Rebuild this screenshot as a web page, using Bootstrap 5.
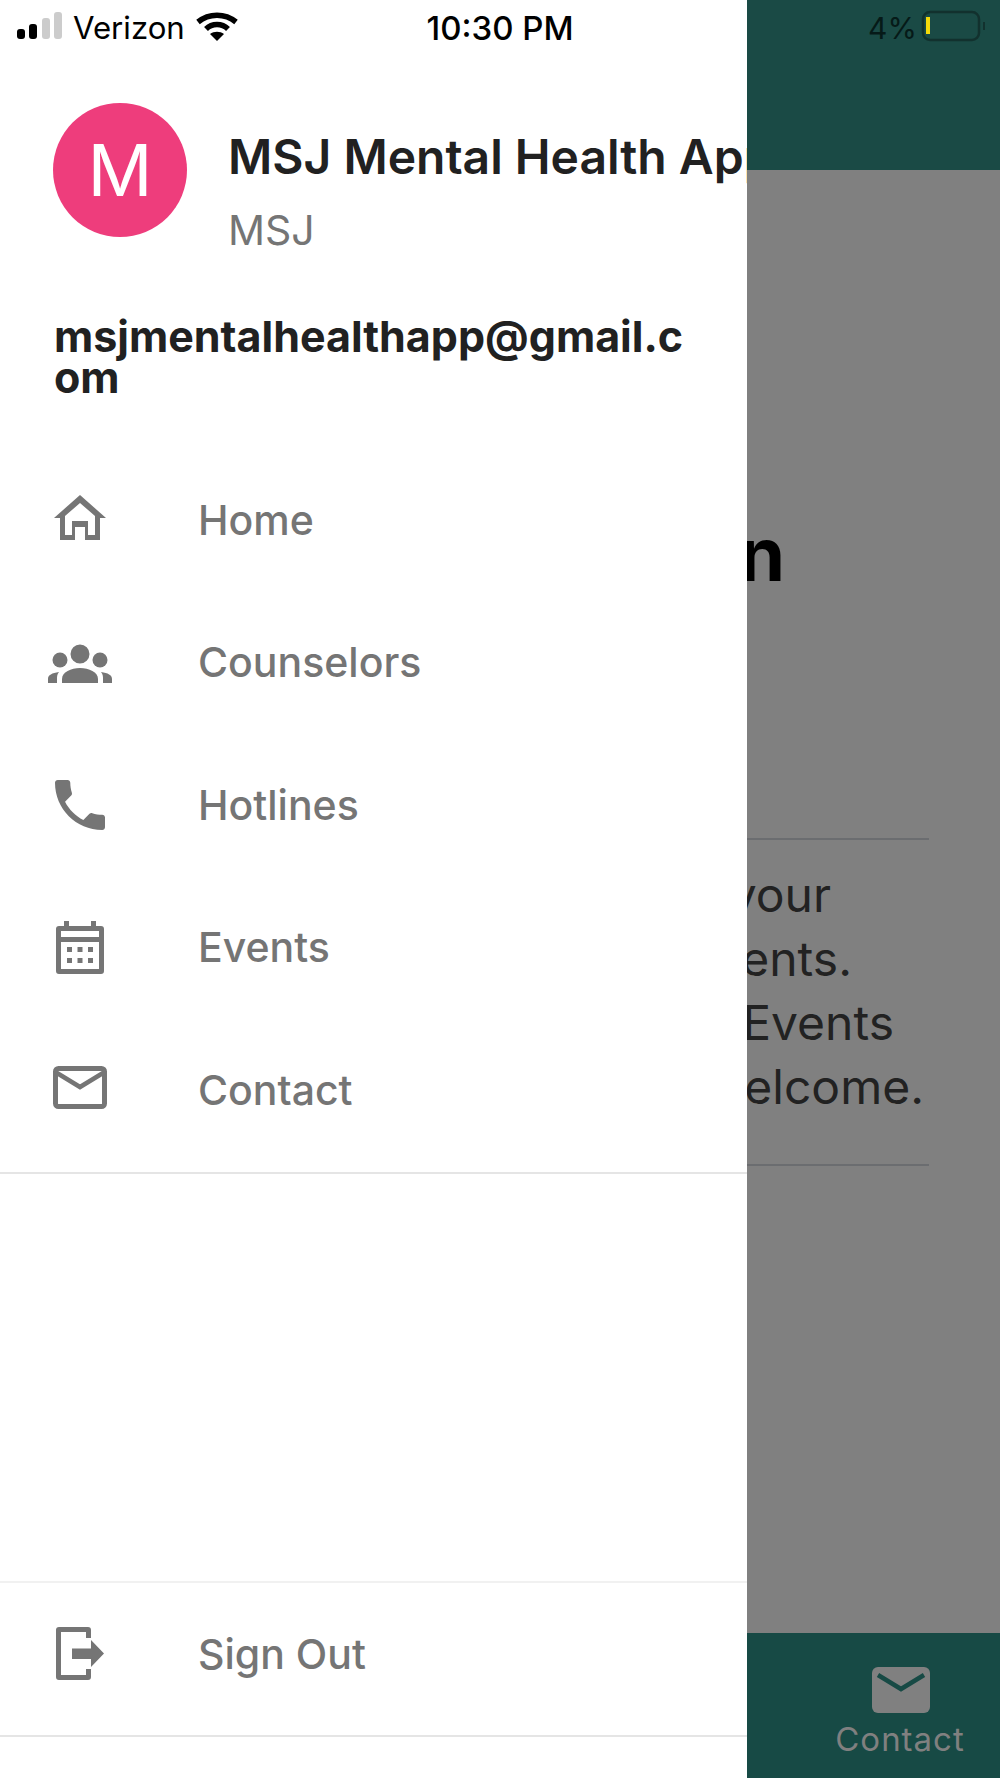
<!DOCTYPE html>
<html lang="en">
<head>
    <meta charset="UTF-8">
    <meta name="viewport" content="width=device-width, initial-scale=1.0">
    <title>MSJ Mental Health App</title>
    <link href="https://cdn.jsdelivr.net/npm/bootstrap@5.3.2/dist/css/bootstrap.min.css" rel="stylesheet">
    <style>
        body { width: 1000px; height: 1778px; overflow: hidden; font-family: Inter, "Liberation Sans", sans-serif; background: #fff; }
        .app-shell { position: relative; width: 1000px; height: 1778px; overflow: hidden; }

        .status-row { position: absolute; top: 0; left: 0; width: 1000px; height: 55px; font-size: 31.2px; line-height: 36px; color: #000; }
        .signal-bars { left: 17px; top: 12px; }
        .carrier { position: absolute; left: 73px; top: 10px; }
        .wifi-icon { left: 196px; top: 12px; }
        .clock { position: absolute; left: 400px; width: 200px; top: 10px; text-align: center; font-size: 33px; font-weight: 500; }
        .batt-text { position: absolute; left: 868px; top: 10px; font-size: 30px; color: #061a18; }
        .batt-icon { left: 921px; top: 10px; }
        .status-row svg { position: absolute; }

        .drawer { width: 747px; height: 1778px; background: #fff; }
        .profile-row { margin-top: 103px; padding-left: 53px; padding-right: 4px; gap: 41px; overflow: hidden; }
        .avatar-dot { width: 134px; height: 134px; flex: none; background: #ee3d7c; color: #fff; font-size: 72px; line-height: 1; }
        .app-name { font-size: 48px; font-weight: 600; line-height: 54px; color: #212121; white-space: nowrap; margin-top: 27px; }
        .app-sub { font-size: 41px; line-height: 48px; color: #757575; margin-top: 22px; }
        .mail-line { width: 640px; margin: 62px 0 0 54px; font-size: 43px; font-weight: 700; line-height: 41px; color: #212121; word-break: break-all; }

        .menu-list { margin-top: 51px; padding-bottom: 10px; border-bottom: 2px solid #e5e5e5; }
        .menu-row { height: 142.5px; padding: 0; color: #757575; font-size: 41px; font-weight: 500; }
        .menu-row:hover { color: #757575; }
        .ico-cell { width: 198px; flex: none; padding-left: 40px; }
        .drawer-foot { margin-bottom: 41px; border-top: 2px solid #f1f1f1; border-bottom: 2px solid #e5e5e5; }
        .drawer-foot .menu-row { height: 152px; padding-bottom: 8px; }

        .backdrop-side { height: 1778px; background: #808080; overflow: hidden; }
        .teal-top { height: 170px; flex: none; background: #1a4a45; }
        .teal-bottom { height: 145px; flex: none; background: #174a45; color: #808080; font-size: 33px; line-height: 40px; letter-spacing: 1px; }
        .tab-item { width: 180px; margin-left: 63px; padding-top: 32px; }
        .tab-item svg { margin-left: 2px; }
        .tab-item div { margin-top: 6px; }
        .bg-title { margin: 341px 215px 0 0; font-size: 74px; font-weight: 700; line-height: 86px; color: #000; }
        .bg-rule { margin: 0 71px 0 0; height: 2px; background: #6b6d70; }
        .bg-rule-first { margin-top: 241px; }
        .bg-copy { font-size: 48px; line-height: 64px; color: #222; padding: 23px 0 45px; }
        .bg-copy div { white-space: nowrap; }
        .end-830 { margin-right: 169px; }
        .end-850 { margin-right: 148px; }
        .end-892 { margin-right: 106px; }
        .end-922 { margin-right: 76px; }
    </style>
</head>
<body>
    <div class="app-shell d-flex">
        <div class="drawer d-flex flex-column flex-shrink-0">
            <div class="profile-row d-flex align-items-start">
                <div class="avatar-dot rounded-circle d-flex align-items-center justify-content-center">M</div>
                <div>
                    <div class="app-name">MSJ Mental Health App</div>
                    <div class="app-sub">MSJ</div>
                </div>
            </div>
            <div class="mail-line">msjmentalhealthapp@gmail.com</div>

            <nav class="menu-list nav flex-column">
                <a class="menu-row nav-link d-flex align-items-center" href="#">
                    <span class="ico-cell"><svg width="80" height="80" viewBox="0 0 80 80" fill="#757575"><path fill-rule="evenodd" d="M40 15 66 38H60V60H45V47H35V60H20V38H14ZM40 23 25 36V55H32V41H48V55H55V36Z"/></svg></span>
                    Home
                </a>
                <a class="menu-row nav-link d-flex align-items-center" href="#">
                    <span class="ico-cell"><svg width="80" height="80" viewBox="0 0 80 80" fill="#757575"><circle cx="20" cy="37" r="7.5"/><circle cx="60" cy="37" r="7.5"/><circle cx="40" cy="31" r="10.5" stroke="#fff" stroke-width="2"/><path d="M22 60V56C22 49 31 45 40 45S58 49 58 56V60Z"/><path d="M8 60V56C8 52 12 50 19 49 17 51 17 54 17 56V60Z"/><path d="M72 60V56C72 52 68 50 61 49 63 51 63 54 63 56V60Z"/></svg></span>
                    Counselors
                </a>
                <a class="menu-row nav-link d-flex align-items-center" href="#">
                    <span class="ico-cell"><svg width="80" height="80" viewBox="-2.400 -2.400 28.800 28.800" fill="#757575"><path d="M6.620 10.790c1.440 2.830 3.760 5.140 6.590 6.590l2.200-2.200c.27-.27.67-.36 1.020-.24 1.120.37 2.330.57 3.570.57.55 0 1 .45 1 1V20c0 .55-.45 1-1 1-9.390 0-17-7.610-17-17 0-.55.45-1 1-1h3.500c.55 0 1 .45 1 1 0 1.250.2 2.450.57 3.570.11.35.03.74-.25 1.020l-2.200 2.200z"/></svg></span>
                    Hotlines
                </a>
                <a class="menu-row nav-link d-flex align-items-center" href="#">
                    <span class="ico-cell"><svg width="80" height="80" viewBox="0 0 80 80" fill="#757575"><path fill-rule="evenodd" d="M24 13H29V18H51V13H56V18H61Q64 18 64 21V63Q64 66 61 66H19Q16 66 16 63V21Q16 18 19 18H24ZM21 23V29H59V23ZM21 34V61H59V34Z"/><path d="M27 39h5v5h-5zM37.500 39h5v5h-5zM48 39h5v5h-5zM27 50h5v5h-5zM37.500 50h5v5h-5zM48 50h5v5h-5z"/></svg></span>
                    Events
                </a>
                <a class="menu-row nav-link d-flex align-items-center" href="#">
                    <span class="ico-cell"><svg width="80" height="80" viewBox="0 0 80 80" fill="none" stroke="#757575" stroke-width="5"><rect x="15.500" y="18.500" width="49" height="38" rx="3"/><path d="M17 23 40 37 63 23" stroke-width="4.500"/></svg></span>
                    Contact
                </a>
            </nav>

            <div class="flex-grow-1"></div>

            <div class="drawer-foot">
                <a class="menu-row nav-link d-flex align-items-center" href="#">
                    <span class="ico-cell"><svg width="80" height="80" viewBox="0 0 80 80" fill="#757575"><path d="M19 12H48Q51 12 51 15V23H46V17H21V60H46V54H51V62Q51 65 48 65H19Q16 65 16 62V15Q16 12 19 12Z"/><path d="M32 33.500H51V25L64 38.500 51 52V44H32Z"/></svg></span>
                    Sign Out
                </a>
            </div>
        </div>

        <div class="backdrop-side flex-grow-1 d-flex flex-column">
            <div class="teal-top"></div>
            <div class="flex-grow-1 d-flex flex-column overflow-hidden">
                <div class="bg-title d-flex justify-content-end">n</div>
                <div class="bg-rule bg-rule-first"></div>
                <div class="bg-copy d-flex flex-column align-items-end">
                    <div class="end-830">your</div>
                    <div class="end-850">ents.</div>
                    <div class="end-892">Events</div>
                    <div class="end-922">elcome.</div>
                </div>
                <div class="bg-rule"></div>
            </div>
            <div class="teal-bottom">
                <div class="tab-item d-flex flex-column align-items-center">
                    <svg width="60" height="48" viewBox="0 0 60 48"><rect x="1" y="2" width="58" height="46" rx="6" fill="#808080"/><path d="M7 10 30 24 53 10" fill="none" stroke="#174a45" stroke-width="4.500"/></svg>
                    <div>Contact</div>
                </div>
            </div>
        </div>

        <div class="status-row">
            <svg class="signal-bars" width="46" height="28" viewBox="0 0 46 28">
                <rect x="0" y="17" width="8" height="10" rx="3" fill="#000"/>
                <rect x="12" y="12" width="8" height="15" rx="3" fill="#000"/>
                <rect x="25" y="6" width="8" height="21" rx="3" fill="#ccc"/>
                <rect x="37" y="0" width="8" height="27" rx="3" fill="#ccc"/>
            </svg>
            <span class="carrier">Verizon</span>
            <svg class="wifi-icon" width="42" height="30" viewBox="0 0 42 30" fill="none" stroke="#000" stroke-width="5.500">
                <path d="M2 10C13 1 29 1 40 10"/>
                <path d="M10 17C16 11 26 11 32 17"/>
                <path d="M21 29 14 22C18 19 24 19 28 22Z" fill="#000" stroke="none"/>
            </svg>
            <span class="clock">10:30 PM</span>
            <span class="batt-text">4%</span>
            <svg class="batt-icon" width="66" height="32" viewBox="0 0 66 32">
                <rect x="2" y="2" width="56" height="28" rx="7" fill="none" stroke="#12312e" stroke-width="2.500"/>
                <rect x="5" y="7" width="4" height="17" fill="#f5d90a"/>
                <rect x="62" y="12" width="2" height="8" fill="#12312e"/>
            </svg>
        </div>
    </div>
    <script src="https://cdn.jsdelivr.net/npm/bootstrap@5.3.2/dist/js/bootstrap.bundle.min.js"></script>
</body>
</html>
